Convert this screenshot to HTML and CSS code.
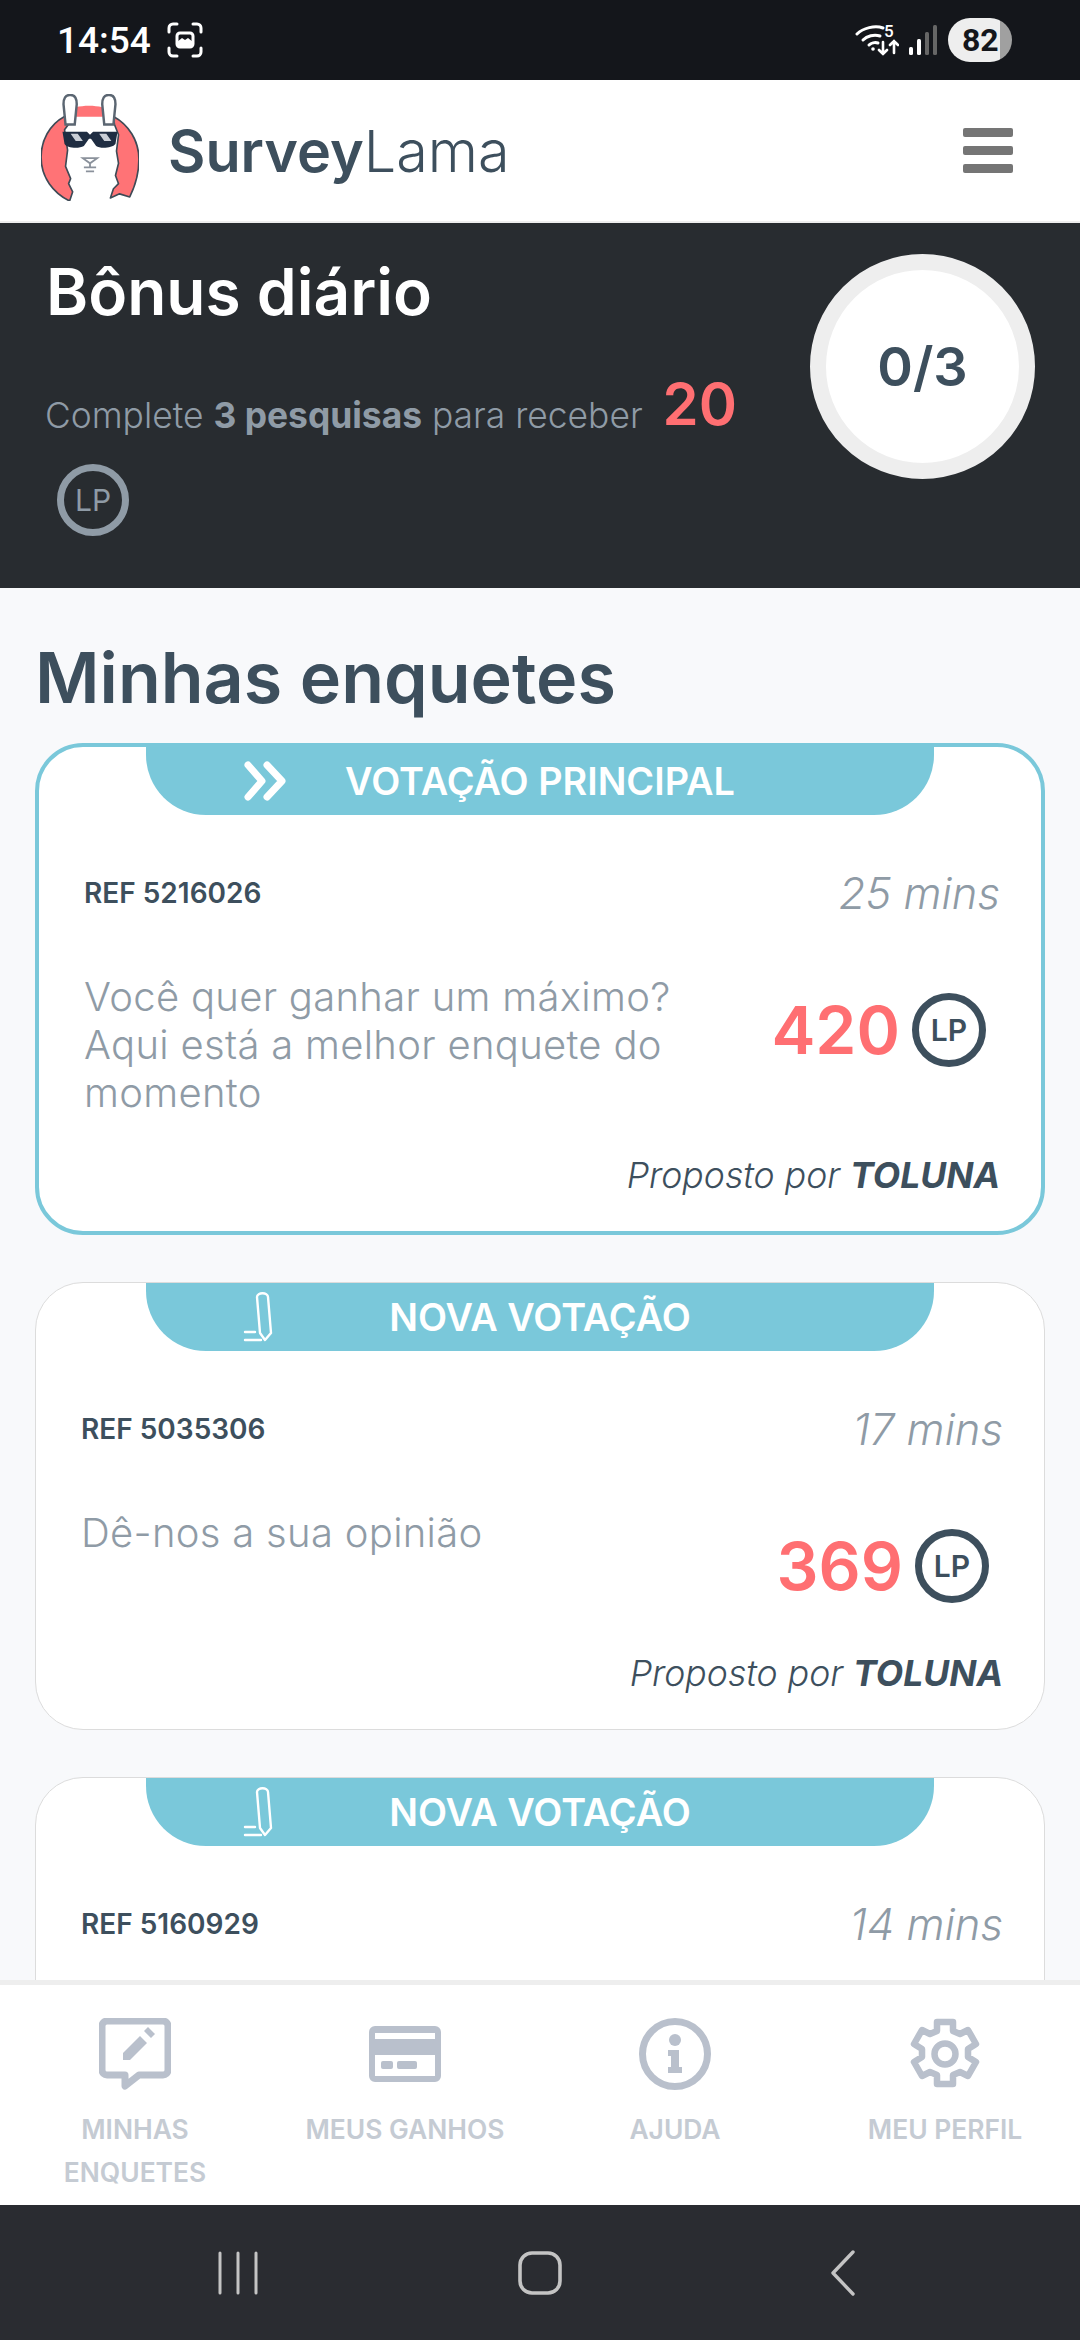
FILE: index.html
```html
<!DOCTYPE html>
<html lang="pt">
<head>
    <meta charset="UTF-8">
    <title>SurveyLama</title>
    <link rel="stylesheet" href="styles.css">
</head>
<body>
    <div class="status-bar">
        <div class="status-left">
            <span class="clock">14:54</span>
            <svg class="shot-icon" viewBox="0 0 36 36" fill="none" stroke="#fff" stroke-width="3" stroke-linecap="round">
                <path d="M2 10V6a4 4 0 0 1 4-4h4M26 2h4a4 4 0 0 1 4 4v4M34 26v4a4 4 0 0 1-4 4h-4M10 34H6a4 4 0 0 1-4-4v-4"/>
                <rect x="10" y="11" width="16" height="14" rx="3"/>
                <path d="M10 20l5-4 3 2 3-2 5 4v5H10z" fill="#fff" stroke="none"/>
            </svg>
        </div>
        <div class="status-right">
            <div class="wifi">
                <svg class="wifi-icon" viewBox="0 0 44 32" fill="none" stroke="#fff" stroke-linecap="round">
                    <path d="M2 10C8 4 20 1 28 4" stroke-width="3"/>
                    <path d="M8 16c4-4 11-6 17-4" stroke-width="3"/>
                    <path d="M14 21c2-2 6-3 9-2" stroke-width="3"/>
                    <circle cx="18" cy="25" r="1.8" fill="#fff" stroke="none"/>
                    <path d="M28 18v12M24 26l4 4 4-4M39 29V17M35 21l4-4 4 4" stroke-width="2.6"/>
                </svg>
                <span class="wifi-five">5</span>
            </div>
            <svg class="signal-icon" viewBox="0 0 28 30">
                <rect x="0" y="22" width="4" height="8" rx="1.5" fill="#fff"/>
                <rect x="8" y="14" width="4" height="16" rx="1.5" fill="#fff"/>
                <rect x="16" y="7" width="4" height="23" rx="1.5" fill="#666"/>
                <rect x="24" y="0" width="4" height="30" rx="1.5" fill="#666"/>
            </svg>
            <div class="battery"><span class="battery-num">82</span></div>
        </div>
    </div>

    <header class="topbar">
        <div class="brand">
            <svg class="logo" viewBox="0 0 96 105">
                <path d="M28 27l12-9h16l14 9 3 14-1 24 2 10-3 8 4 17H28l-3-9 3-8-4-10 2-14-2-16z" fill="#fff"/>
                <path d="M34 22c8-8 20-8 28 0z" fill="#ff7376"/>
                <path d="M34 13c8-2 18-2 26 0v9H34z" fill="#ff7376"/>
                <path d="M23 22C8 30 0 46 0 62c0 20 12 35 28 43l3-9-4-8 2-5-5-12 2-16-3-20 6-8z" fill="#ff7376" stroke="#3e4a56" stroke-width="1.6" stroke-linejoin="round"/>
                <path d="M71 22c15 8 25 24 25 42 0 15-4 27-9 37l-10-3-9 4 3-9 5-5-3-8 3-12-2-12 2-16-4-10z" fill="#ff7376" stroke="#3e4a56" stroke-width="1.6" stroke-linejoin="round"/>
                <path d="M24 30L22 10c0-6 2-9 6-9h1c4 0 6 3 6 9l-2 20zM62 30l-2-20c0-6 2-9 6-9h1c4 0 6 3 6 9l-2 20z" fill="#fff" stroke="#5b6672" stroke-width="2.4"/>
                <path d="M21 37h24l3 3 3-3h24l-2 12c-3 4-15 5-19 2l-5-7h-2l-5 7c-5 3-17 2-19-2z" fill="#1f2d42"/>
                <path d="M29 39h7l5 7h-7zM57 39h7l5 7h-7z" fill="#c9ced6"/>
                <path d="M41 63h14l-7 5zM48 68v4M42 72h12M44 76h8" stroke="#8a919b" stroke-width="1.8" fill="none"/>
            </svg>
            <span class="brand-name"><b>Survey</b>Lama</span>
        </div>
        <div class="burger"><span></span><span></span><span></span></div>
    </header>

    <section class="bonus">
        <div class="bonus-text">
            <h2>Bônus diário</h2>
            <p>Complete <b>3 pesquisas</b> para receber <span class="bonus-points">20</span> <span class="lp lp-light">LP</span></p>
        </div>
        <div class="progress">0/3</div>
    </section>

    <main class="content">
        <h1>Minhas enquetes</h1>

        <div class="card card-main">
            <div class="card-tab">
                <svg class="tab-icon" viewBox="0 0 45 40" fill="none" stroke="#fff" stroke-width="7" stroke-linecap="round" stroke-linejoin="round">
                    <path d="M5 4l14 16L5 36M24 4l15 16-15 16"/>
                </svg>
                <span>VOTAÇÃO PRINCIPAL</span>
            </div>
            <div class="card-meta">
                <span class="ref">REF 5216026</span>
                <span class="time">25 mins</span>
            </div>
            <div class="card-body">
                <p>Você quer ganhar um máximo? Aqui está a melhor enquete do momento</p>
                <div class="reward"><span class="points">420</span><span class="lp">LP</span></div>
            </div>
            <div class="card-foot">Proposto por <b>TOLUNA</b></div>
        </div>

        <div class="card">
            <div class="card-tab">
                <svg class="tab-icon pen-icon" viewBox="0 0 32 52" fill="none" stroke="#fff" stroke-width="2.4" stroke-linecap="round" stroke-linejoin="round">
                    <path d="M14 6c0-5 11-5 11 0l3 36-6 7-5-7z"/>
                    <path d="M2 41h10M2 49h16"/>
                </svg>
                <span>NOVA VOTAÇÃO</span>
            </div>
            <div class="card-meta">
                <span class="ref">REF 5035306</span>
                <span class="time">17 mins</span>
            </div>
            <div class="card-body">
                <p>Dê-nos a sua opinião</p>
                <div class="reward"><span class="points">369</span><span class="lp">LP</span></div>
            </div>
            <div class="card-foot">Proposto por <b>TOLUNA</b></div>
        </div>

        <div class="card">
            <div class="card-tab">
                <svg class="tab-icon pen-icon" viewBox="0 0 32 52" fill="none" stroke="#fff" stroke-width="2.4" stroke-linecap="round" stroke-linejoin="round">
                    <path d="M14 6c0-5 11-5 11 0l3 36-6 7-5-7z"/>
                    <path d="M2 41h10M2 49h16"/>
                </svg>
                <span>NOVA VOTAÇÃO</span>
            </div>
            <div class="card-meta">
                <span class="ref">REF 5160929</span>
                <span class="time">14 mins</span>
            </div>
        </div>
    </main>

    <nav class="tabbar">
        <div class="tab-item">
            <svg viewBox="0 0 72 72" fill="none" stroke="#b9c0cc" stroke-width="7" stroke-linejoin="round">
                <path d="M8 3h56a5 5 0 0 1 5 5v44a5 5 0 0 1-5 5H40L26 68V57H8a5 5 0 0 1-5-5V8a5 5 0 0 1 5-5z"/>
                <path d="M24 42v-7l17-17 7 7-17 17zM45 13l4-4 7 7-4 4z" fill="#b9c0cc" stroke="none"/>
            </svg>
            <span>MINHAS ENQUETES</span>
        </div>
        <div class="tab-item">
            <svg viewBox="0 0 72 72">
                <path d="M6 8h60a6 6 0 0 1 6 6v44a6 6 0 0 1-6 6H6a6 6 0 0 1-6-6V14a6 6 0 0 1 6-6zm0 7v6h60v-6zm0 22v21h60V37z" fill="#b9c0cc" fill-rule="evenodd"/>
                <rect x="12" y="43" width="12" height="8" rx="2" fill="#b9c0cc"/>
                <rect x="28" y="43" width="20" height="8" rx="2" fill="#b9c0cc"/>
            </svg>
            <span>MEUS GANHOS</span>
        </div>
        <div class="tab-item">
            <svg viewBox="0 0 72 72" fill="none">
                <circle cx="36" cy="36" r="32.5" stroke="#b9c0cc" stroke-width="7"/>
                <circle cx="36" cy="22" r="6" fill="#b9c0cc"/>
                <path d="M29 32h11v17h3v6H29v-6h3v-11h-3z" fill="#b9c0cc"/>
            </svg>
            <span>AJUDA</span>
        </div>
        <div class="tab-item">
            <svg viewBox="0 0 72 72" fill="none" stroke="#b9c0cc" stroke-width="6.5" stroke-linejoin="round">
                <path d="M28 4h16v9l7 3 8-4 8 14-8 5v8l8 5-8 14-8-4-7 3v9H28v-9l-7-3-8 4-8-14 8-5v-8l-8-5 8-14 8 4 7-3z"/>
                <circle cx="36" cy="36" r="10.5"/>
            </svg>
            <span>MEU PERFIL</span>
        </div>
    </nav>

    <div class="sys-nav">
        <svg class="sys-recent" viewBox="0 0 40 44" stroke="#c4c4c4" stroke-width="3" stroke-linecap="round">
            <path d="M2 2v40M20 2v40M38 2v40"/>
        </svg>
        <svg class="sys-home" viewBox="0 0 44 44" fill="none" stroke="#c4c4c4" stroke-width="3.6">
            <rect x="2" y="2" width="40" height="40" rx="12"/>
        </svg>
        <svg class="sys-back" viewBox="0 0 24 46" fill="none" stroke="#c4c4c4" stroke-width="3.4" stroke-linecap="round" stroke-linejoin="round">
            <path d="M22 2L2 23l20 21"/>
        </svg>
    </div>
</body>
</html>
```

FILE: styles.css
```css
* {
    box-sizing: border-box;
}
html, body {
    margin: 0;
    padding: 0;
}
body {
    width: 1080px;
    height: 2340px;
    display: flex;
    flex-direction: column;
    overflow: hidden;
    font-family: "Inter", "Noto Sans", sans-serif;
    color: #3d4f5d;
    background: #f8f9fb;
}

/* status bar */
.status-bar {
    height: 80px;
    flex: none;
    background: #14161b;
    display: flex;
    justify-content: space-between;
    align-items: center;
    padding: 0 68px 0 57px;
    font-family: "Roboto", sans-serif;
}
.status-left, .status-right {
    display: flex;
    align-items: center;
}
.clock {
    color: #fff;
    font-size: 37px;
    font-weight: 500;
}
.shot-icon {
    width: 36px;
    height: 36px;
    margin-left: 16px;
}
.wifi {
    position: relative;
    width: 44px;
    height: 32px;
}
.wifi-icon {
    display: block;
    width: 44px;
    height: 32px;
}
.wifi-five {
    position: absolute;
    left: 29px;
    top: -3px;
    color: #fff;
    font-size: 17px;
    line-height: 20px;
    font-weight: 500;
}
.signal-icon {
    width: 28px;
    height: 30px;
    margin: 0 11px 0 10px;
}
.battery {
    width: 64px;
    height: 44px;
    border-radius: 22px;
    background: linear-gradient(to right, #eee 52px, #a0a0a0 52px);
    color: #14161b;
    display: flex;
    align-items: center;
    padding-left: 14px;
}
.battery-num {
    font-size: 32px;
    font-weight: 700;
}

/* header */
.topbar {
    height: 143px;
    flex: none;
    background: #fff;
    border-bottom: 2px solid #eee;
    display: flex;
    justify-content: space-between;
    align-items: center;
    padding: 0 67px 0 41px;
}
.brand {
    display: flex;
    align-items: center;
}
.logo {
    width: 98px;
    height: 107px;
    margin-bottom: 6px;
}
.brand-name {
    margin-left: 29px;
    font-size: 57.5px;
    font-weight: 300;
    color: #3d4f5d;
}
.brand-name b {
    font-weight: 600;
}
.burger {
    width: 50px;
    display: flex;
    flex-direction: column;
    gap: 9.5px;
}
.burger span {
    height: 8.5px;
    background: #757575;
    border-radius: 2px;
}

/* daily bonus */
.bonus {
    height: 365px;
    flex: none;
    background: #282c30;
    display: flex;
    justify-content: space-between;
    padding: 31px 45px 0 45px;
}
.bonus-text {
    width: 720px;
}
.bonus h2 {
    margin: 3px 0 0 1px;
    color: #fff;
    font-size: 64px;
    font-weight: 600;
    line-height: 70px;
}
.bonus p {
    margin: 36px 0 0;
    color: #8f9ba6;
    font-size: 35.4px;
    font-weight: 300;
    line-height: 82px;
}
.bonus p b {
    font-weight: 700;
}
.bonus-points {
    color: #ff6f72;
    font-size: 58px;
    font-weight: 600;
    margin-left: 10px;
    vertical-align: 3px;
}
.progress {
    width: 225px;
    height: 225px;
    border-radius: 50%;
    border: 16px solid #eee;
    background: #fff;
    color: #3d4f5d;
    font-size: 54px;
    font-weight: 600;
    display: flex;
    align-items: center;
    justify-content: center;
}
.lp {
    width: 74px;
    height: 74px;
    flex: none;
    border-radius: 50%;
    border: 7px solid #3d4f5d;
    color: #3d4f5d;
    font-size: 30px;
    font-weight: 600;
    display: inline-flex;
    align-items: center;
    justify-content: center;
}
.lp-light {
    width: 72px;
    height: 72px;
    margin-left: 12px;
    border-color: #8f9ba6;
    color: #8f9ba6;
    font-weight: 400;
    vertical-align: middle;
}

/* surveys */
.content {
    flex: 1;
    min-height: 0;
    overflow: hidden;
    padding: 0 35px;
}
.content h1 {
    margin: 45px 0 0;
    font-size: 70px;
    font-weight: 600;
    line-height: 90px;
    color: #3d4f5d;
}
.card {
    background: #fff;
    border: 1.5px solid #dcdcdc;
    border-radius: 48px;
    margin-top: 47px;
    height: 448px;
}
.card-main {
    border: 4px solid #7ac8da;
    margin-top: 20px;
    height: 492px;
}
.card-tab {
    width: 788px;
    height: 68px;
    margin: 0 auto;
    background: #7ac8da;
    border-radius: 0 0 60px 60px;
    color: #fff;
    font-size: 37.8px;
    font-weight: 600;
    display: grid;
    grid-template-columns: 1fr auto 1fr;
    align-items: center;
}
.card-tab span {
    grid-column: 2;
}
.tab-icon {
    grid-column: 1;
    grid-row: 1;
    width: 45px;
    height: 40px;
    margin-left: 97px;
}
.pen-icon {
    width: 32px;
    height: 52px;
}
.card-meta, .card-body, .card-foot {
    margin-left: 45px;
    margin-right: 41px;
}
.card-meta {
    display: flex;
    justify-content: space-between;
    align-items: center;
    margin-top: 48px;
    height: 60px;
}
.ref {
    font-size: 28px;
    font-weight: 600;
    color: #3d4f5d;
}
.time {
    font-size: 43.6px;
    font-weight: 300;
    font-style: italic;
    color: #8f9ba6;
}
.card-body {
    display: flex;
    justify-content: space-between;
    align-items: flex-start;
    margin-top: 50px;
    min-height: 106px;
}
.card-body p {
    margin: 0;
    width: 610px;
    color: #8f9ba6;
    font-size: 40px;
    letter-spacing: 0.3px;
    font-weight: 300;
    line-height: 48px;
}
.reward {
    display: flex;
    align-items: center;
    gap: 12px;
    margin: 17px 14px 0 0;
}
.points {
    color: #ff6f72;
    font-size: 66px;
    font-weight: 600;
}
.card-foot {
    margin-top: 37px;
    text-align: right;
    font-size: 35.6px;
    line-height: 44px;
    font-weight: 300;
    font-style: italic;
    color: #3d4f5d;
}
.card-foot b {
    font-weight: 700;
}

/* bottom tabs */
.tabbar {
    height: 225px;
    flex: none;
    background: #fff;
    border-top: 5px solid #eee;
    display: grid;
    grid-template-columns: repeat(4, 270px);
}
.tab-item {
    display: flex;
    flex-direction: column;
    align-items: center;
    padding-top: 33px;
    text-align: center;
    color: #c5cbd3;
    font-size: 26.4px;
    font-weight: 600;
    line-height: 43px;
}
.tab-item svg {
    width: 72px;
    height: 72px;
    margin-bottom: 18px;
}
.tab-item span {
    width: 220px;
}

/* android nav */
.sys-nav {
    height: 135px;
    flex: none;
    background: #2a2c31;
    display: flex;
    align-items: center;
    padding-left: 218px;
}
.sys-recent {
    width: 40px;
    height: 44px;
}
.sys-home {
    width: 44px;
    height: 44px;
    margin-left: 260px;
}
.sys-back {
    width: 24px;
    height: 46px;
    margin-left: 269px;
}
```
